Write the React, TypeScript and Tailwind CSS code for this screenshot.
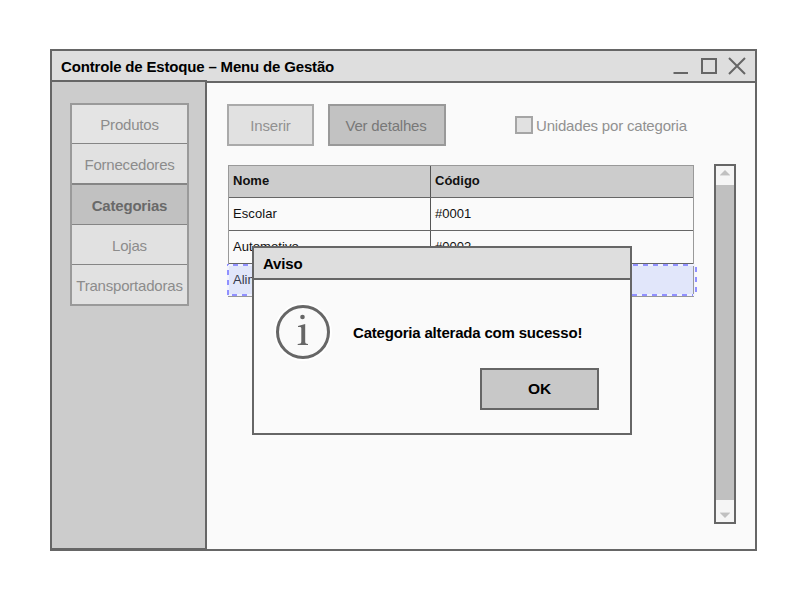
const menu = [
  { label: "Produtos", style: "h-[38px] bg-[#e4e4e4] leading-[39px]" },
  { label: "Fornecedores", style: "h-[40px] border-t border-t-[#858585] bg-[#e1e1e1] leading-[42px]" },
  { label: "Categorias", style: "h-[42px] border-t-2 border-b border-y-[#858585] bg-[#c1c1c1] font-bold leading-[42px] text-[#696969]" },
  { label: "Lojas", style: "h-[39px] bg-[#e1e1e1] leading-[42px]" },
  { label: "Transportadoras", style: "h-[40px] border-t border-t-[#858585] bg-[#e1e1e1] leading-[42px]" },
];

function WindowControls() {
  return (
    <svg width="74" height="18" viewBox="0 0 74 18" fill="none" stroke="#666" strokeWidth="2">
      <path d="M1.5 16H16M30 2H44V16H30ZM57 1L73 17M73 1L57 17" />
    </svg>
  );
}

function Scrollbar() {
  return (
    <div className="flex h-[360px] w-[22px] flex-col border-2 border-[#666] bg-[#f5f5f5]">
      <svg className="h-[19px] w-[18px] shrink-0" viewBox="0 0 18 19">
        <path d="M4 9L9 4L14 9V10H4Z" fill="#c0c0c0" />
        <path d="M4 9H14V10H4Z" fill="#dedede" />
      </svg>
      <div className="flex-1 bg-[#c0c0c0]" />
      <svg className="h-[22px] w-[18px] shrink-0" viewBox="0 0 18 22">
        <path d="M4 13H14L9 18Z" fill="#c0c0c0" />
        <path d="M4 12H14V13H4Z" fill="#dedede" />
      </svg>
    </div>
  );
}

function CategoryTable() {
  return (
    <div className="relative h-[132px] w-[466px] border border-[#999] text-[13px] leading-[32px] text-[#111]">
      <div className="grid h-[32px] grid-cols-[202px_1fr] border-b border-[#666] bg-[#ccc] font-bold leading-[30px]">
        <span className="border-r border-[#555] pl-[4px]">Nome</span>
        <span className="pl-[4px]">Código</span>
      </div>
      <div className="grid h-[33px] grid-cols-[202px_1fr] border-b border-[#666]">
        <span className="border-r border-[#555] pl-[4px] tracking-[0.08px]">Escolar</span>
        <span className="pl-[4px]">#0001</span>
      </div>
      <div className="grid h-[33px] grid-cols-[202px_1fr] border-b border-[#666]">
        <span className="border-r border-[#555] pl-[4px] tracking-[0.08px]">Automotivo</span>
        <span className="pl-[4px]">#0002</span>
      </div>
      <div className="grid h-[32px] grid-cols-[202px_1fr] bg-[#e1e6fa] text-[#363a4e]">
        <span className="pl-[4px]">Alimentos</span>
        <span className="pl-[4px]">#0003</span>
      </div>
      <svg className="absolute -left-[2px] top-[98px] h-[32px] w-[470px]" viewBox="0 0 470 32" fill="none" stroke="#9090ff" strokeWidth="2">
        <path d="M1 1H467M1 31H467M1 0V32" stroke="#f0f2ff" />
        <path d="M467.5 0V32" stroke="#f0f2ff" strokeWidth="1" />
        <path d="M0 1H466M466 31H0" strokeDasharray="5 5" strokeDashoffset="4" />
        <path d="M469 3V32M1 31V0" strokeDasharray="5 5" />
      </svg>
    </div>
  );
}

function NoticeDialog() {
  return (
    <div className="absolute left-[252px] top-[246px] flex h-[189px] w-[380px] flex-col border-2 border-[#666] bg-[#fafafa] font-bold text-black">
      <div className="h-[32px] shrink-0 border-b-2 border-[#666] bg-[#dedede] pl-[9px] text-[15px] leading-[32px] tracking-[-0.17px]">Aviso</div>
      <div className="flex items-center pl-[20px] pt-[23px]">
        <svg width="58" height="58" viewBox="0 0 58 58">
          <circle cx="29" cy="29" r="29" fill="#fff" />
          <circle cx="29" cy="29" r="25.5" fill="#fafafa" stroke="#666" strokeWidth="3" />
          <circle cx="28.5" cy="14" r="2.3" fill="#666" />
          <path d="M24 23L31.2 21V38.5C31.2 40.5 32 40.9 34 41V42H23.7V41C26.3 40.8 27.3 40.4 27.3 38.5V25.2C27.3 23.9 26.2 23.7 24 24Z" fill="#666" />
        </svg>
        <span className="ml-[21px] pt-[2px] text-[15px] leading-[20px] tracking-[-0.19px]">Categoria alterada com sucesso!</span>
      </div>
      <button className="ml-[226px] mt-[7px] h-[42px] w-[119px] border-2 border-[#666] bg-[#c8c8c8] text-[15.5px] leading-[38px]">OK</button>
    </div>
  );
}

export default function App() {
  return (
    <div className="relative h-[601px] w-[805px] overflow-hidden whitespace-nowrap bg-white pl-[50px] pt-[49px] [font-family:'Liberation_Sans',Arial,sans-serif]">
      <div className="flex h-[502px] w-[707px] flex-col border-2 border-[#666] bg-[#fafafa]">
        <header className="flex h-[32px] shrink-0 items-start justify-between border-b-2 border-[#666] bg-[#dedede] pl-[9px] pr-[9px]">
          <h1 className="text-[15px] font-bold leading-[32px] tracking-[-0.17px] text-black">Controle de Estoque – Menu de Gestão</h1>
          <div className="pt-[6px]"><WindowControls /></div>
        </header>
        <div className="flex min-h-0 flex-1">
          <aside className="-mt-[3px] w-[155px] shrink-0 border-b border-r-2 border-t-2 border-[#666] bg-[#ccc] pl-[18px] pt-[21px]">
            <nav className="flex w-[119px] flex-col border-2 border-[#9a9a9a] text-center text-[15px] tracking-[-0.2px] text-[#8c8c8c]">
              {menu.map((item) => (
                <a key={item.label} className={item.style}>{item.label}</a>
              ))}
            </nav>
          </aside>
          <main className="flex min-w-0 flex-1 flex-col pl-[20px] pt-[21px]">
            <div className="flex items-center text-[15px] tracking-[-0.19px] text-[#919191]">
              <button className="h-[42px] w-[87px] border-2 border-[#aaa] bg-[#e1e1e1] pt-[2px]">Inserir</button>
              <button className="ml-[14px] h-[42px] w-[118px] border-2 border-[#999] bg-[#c2c2c2] pr-[2px] pt-[2px] text-[#787878]">Ver detalhes</button>
              <label className="ml-[69px] flex items-center gap-[3px]">
                <span className="h-[18px] w-[18px] border-2 border-[#a5a5a5] bg-[#e1e1e1]" />
                <span className="pt-[2px]">Unidades por categoria</span>
              </label>
            </div>
            <div className="flex items-start pl-px pt-[18px]">
              <div className="pt-px"><CategoryTable /></div>
              <div className="pl-[20px]"><Scrollbar /></div>
            </div>
          </main>
        </div>
      </div>
      <NoticeDialog />
    </div>
  );
}
